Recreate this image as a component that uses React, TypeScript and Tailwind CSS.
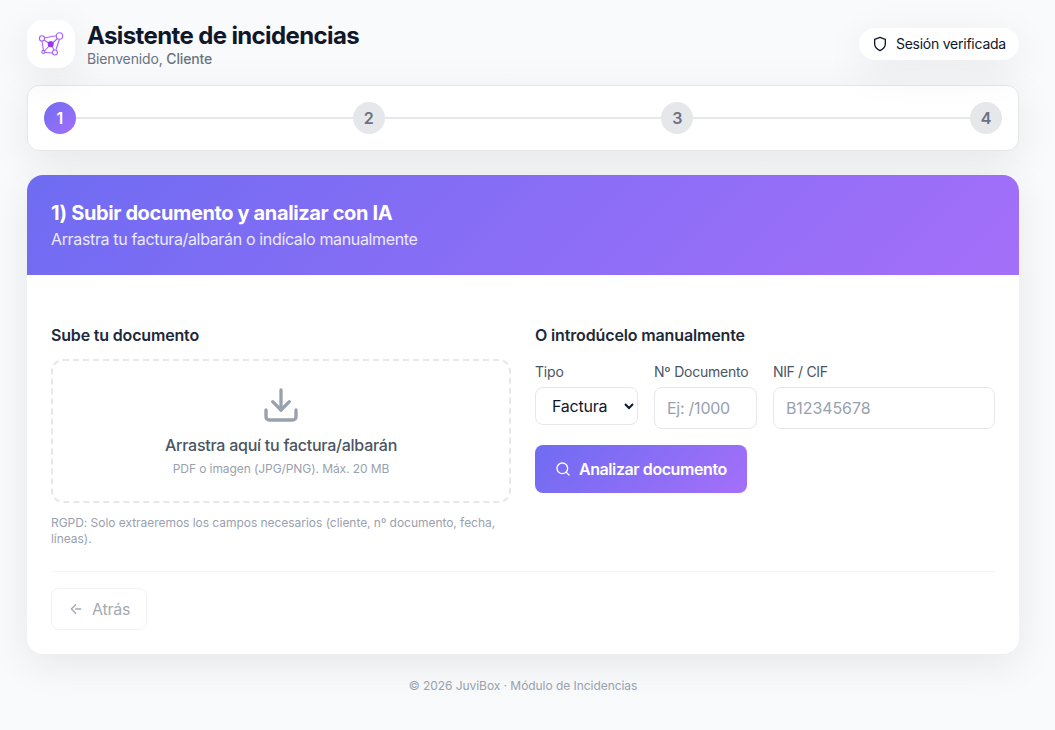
import { Fragment } from "react";
import { FiDownload, FiSearch, FiShield } from "react-icons/fi";

const STEPS = [1, 2, 3, 4];
const CURRENT_STEP = 1;

function Logo() {
  return (
    <svg width="28" height="28" viewBox="0 0 28 28" fill="none" stroke="#a560fb" strokeWidth="1.1">
      <path d="M7 8 20.500 5.500M5 11 6.500 20.500M22.500 9 19 19.500M8 22.500 15.500 23M7 10l6 4M21 8l-6.500 6M7.500 21l5.500-6M14.500 15l3 6" />
      <circle cx="5" cy="8.400" r="2.600" fill="#fff" />
      <circle cx="22.500" cy="6" r="3.200" fill="#fff" />
      <circle cx="6.300" cy="21.900" r="1.500" fill="#fff" />
      <circle cx="17.900" cy="22.500" r="2.500" fill="#fff" />
      <rect x="11.300" y="11.800" width="4.800" height="4.800" rx="1.500" fill="#9333ea" stroke="#9a40f0" />
    </svg>
  );
}

function BackArrow() {
  return (
    <svg
      width="16"
      height="16"
      viewBox="0 0 24 24"
      fill="none"
      stroke="currentColor"
      strokeWidth="2"
      strokeLinecap="round"
      strokeLinejoin="round"
    >
      <path d="M19 12h-7.500M11.500 5.500 5 12l6.500 6.500" />
    </svg>
  );
}

function Header() {
  return (
    <header className="flex items-center justify-between">
      <div className="flex items-center gap-3">
        <div className="flex h-12 w-12 items-center justify-center rounded-2xl bg-white shadow-[0_10px_40px_rgba(0,0,0,0.08)]">
          <Logo />
        </div>
        <div>
          <h1 className="pt-px text-2xl leading-[29px] font-bold tracking-[-0.62px] text-slate-900">
            Asistente de incidencias
          </h1>
          <p className="text-sm leading-[18px] tracking-[-0.15px] text-gray-500">
            Bienvenido, <span className="font-medium">Cliente</span>
          </p>
        </div>
      </div>
      <div className="flex h-8 items-center gap-2 rounded-full bg-white px-[13px] text-sm tracking-[-0.24px] text-slate-900 shadow-[0_10px_40px_rgba(0,0,0,0.08)]">
        <FiShield size={16} />
        <span>Sesión verificada</span>
      </div>
    </header>
  );
}

function Stepper() {
  return (
    <div className="mt-[17px] flex items-center rounded-xl border border-gray-200 bg-white p-4 shadow-[0_10px_40px_rgba(0,0,0,0.08)]">
      {STEPS.map((step, idx) => (
        <Fragment key={step}>
          {idx > 0 && <div className="h-0.5 flex-1 bg-gray-200" />}
          <div
            className={
              step === CURRENT_STEP
                ? "flex h-8 w-8 items-center justify-center rounded-full bg-[linear-gradient(135deg,#6f6cf2,#a46ff9)] font-semibold text-white"
                : "flex h-8 w-8 items-center justify-center rounded-full bg-gray-200 font-semibold text-gray-500"
            }
          >
            {step}
          </div>
        </Fragment>
      ))}
    </div>
  );
}

function UploadPanel() {
  return (
    <div>
      <h3 className="mb-3 font-semibold tracking-[-0.17px] text-gray-800">Sube tu documento</h3>
      <div className="flex flex-col items-center rounded-xl border-2 border-dashed border-gray-200 p-6 text-center">
        <FiDownload size={40} className="mb-2 text-gray-400" />
        <p className="font-medium tracking-[-0.25px] text-gray-600">Arrastra aquí tu factura/albarán</p>
        <p className="mt-1 text-xs tracking-[-0.08px] text-gray-400">PDF o imagen (JPG/PNG). Máx. 20 MB</p>
      </div>
      <p className="mt-3 text-xs tracking-[-0.04px] text-gray-400">
        RGPD: Solo extraeremos los campos necesarios (cliente, nº documento, fecha, líneas).
      </p>
    </div>
  );
}

function ManualPanel() {
  return (
    <div>
      <h3 className="mb-3 font-semibold tracking-[-0.14px] text-gray-800">O introdúcelo manualmente</h3>
      <div className="grid grid-cols-4 gap-4">
        <div>
          <label className="text-sm tracking-[-0.2px] text-gray-600">Tipo</label>
          <select className="mt-1 block h-[38px] w-full rounded-lg border border-gray-200 bg-white px-3 tracking-[-0.25px] text-slate-900">
            <option>Factura</option>
            <option>Albarán</option>
          </select>
        </div>
        <div>
          <label className="text-sm tracking-[-0.22px] whitespace-nowrap text-gray-600">Nº Documento</label>
          <input
            className="mt-1 block w-full rounded-lg border border-gray-200 px-3 py-2 tracking-[-0.25px] placeholder:text-gray-400"
            placeholder="Ej: /1000"
          />
        </div>
        <div className="col-span-2">
          <label className="text-sm tracking-[-0.35px] text-gray-600">NIF / CIF</label>
          <input
            className="mt-1 block w-full rounded-lg border border-gray-200 px-3 py-2 tracking-[-0.1px] placeholder:text-gray-400"
            placeholder="B12345678"
          />
        </div>
      </div>
      <button className="mt-4 flex items-center gap-2 rounded-lg bg-[linear-gradient(135deg,#6f6cf2,#a46ff9)] px-5 py-3 font-semibold tracking-[-0.42px] text-white">
        <FiSearch size={16} />
        Analizar documento
      </button>
    </div>
  );
}

export default function App() {
  return (
    <div className="min-h-screen bg-linear-to-b from-gray-50 to-slate-50 pr-[9px] font-['Inter',sans-serif]">
      <div className="mx-auto max-w-5xl px-4 pt-5">
        <Header />
        <Stepper />

        <main className="mt-6 overflow-hidden rounded-2xl bg-white shadow-[0_10px_40px_rgba(0,0,0,0.08)]">
          <div className="bg-[linear-gradient(135deg,#6f6cf2,#a46ff9)] p-6 text-white">
            <h2 className="text-xl font-bold tracking-[-0.37px]">1) Subir documento y analizar con IA</h2>
            <p className="tracking-[-0.35px] text-white/85">Arrastra tu factura/albarán o indícalo manualmente</p>
          </div>
          <div className="px-6 pt-12 pb-6">
            <div className="grid grid-cols-2 gap-6">
              <UploadPanel />
              <ManualPanel />
            </div>
            <div className="mt-6 border-t border-gray-100 pt-4">
              <button
                disabled
                className="flex items-center gap-2 rounded-lg border border-gray-200 px-4 py-2 tracking-[-0.25px] text-gray-600 opacity-50"
              >
                <BackArrow />
                Atrás
              </button>
            </div>
          </div>
        </main>

        <footer className="mt-6 text-center text-xs tracking-[-0.05px] text-gray-400">
          © 2026 JuviBox · Módulo de Incidencias
        </footer>
      </div>
    </div>
  );
}
